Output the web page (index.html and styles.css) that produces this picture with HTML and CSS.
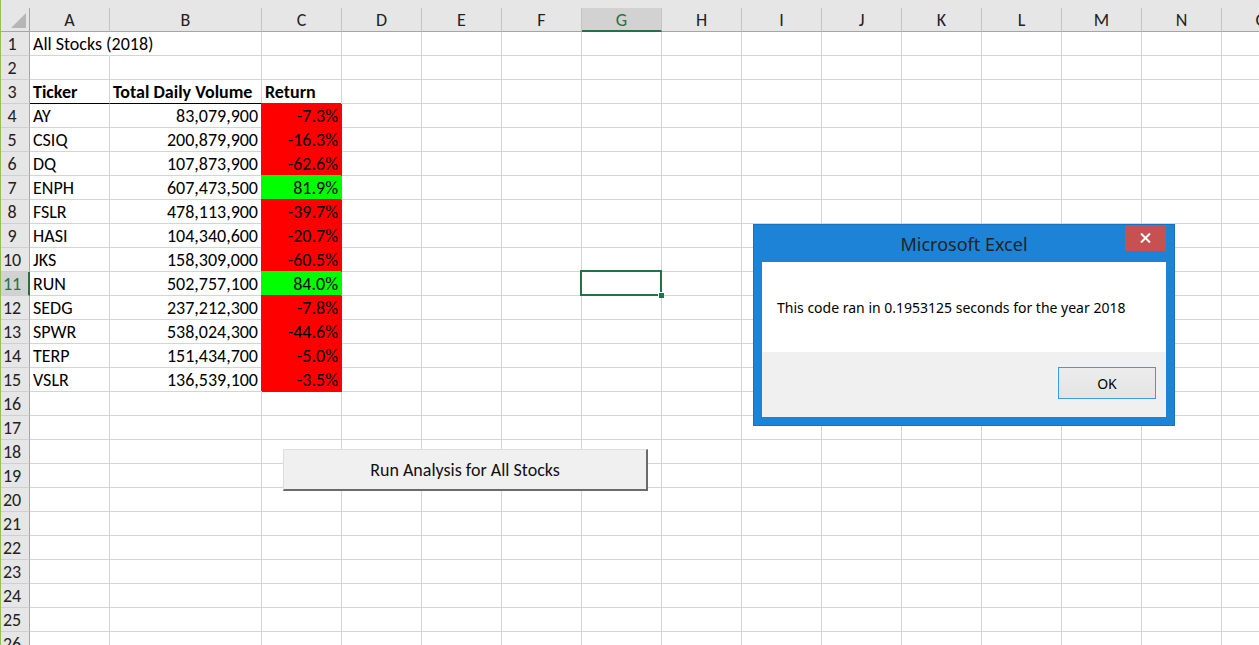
FILE: index.html
```html
<!DOCTYPE html>
<html lang="en">
<head>
<meta charset="utf-8">
<title>Excel - All Stocks (2018)</title>
<link rel="stylesheet" href="styles.css">
</head>
<body>
<div class="sheet">
  <div class="row hrow">
    <div class="corner"><span class="tri"></span></div>
    <div class="ch">A</div><div class="ch">B</div><div class="ch">C</div><div class="ch">D</div><div class="ch">E</div><div class="ch">F</div><div class="ch sel">G</div><div class="ch">H</div><div class="ch">I</div><div class="ch">J</div><div class="ch">K</div><div class="ch">L</div><div class="ch">M</div><div class="ch">N</div><div class="ch">O</div>
  </div>
  <div class="row"><div class="rh">1</div><div class="c spill">All Stocks (2018)</div><div class="c"></div><div class="c"></div><div class="c"></div><div class="c"></div><div class="c"></div><div class="c"></div><div class="c"></div><div class="c"></div><div class="c"></div><div class="c"></div><div class="c"></div><div class="c"></div><div class="c"></div><div class="c"></div></div>
  <div class="row"><div class="rh">2</div><div class="c"></div><div class="c"></div><div class="c"></div><div class="c"></div><div class="c"></div><div class="c"></div><div class="c"></div><div class="c"></div><div class="c"></div><div class="c"></div><div class="c"></div><div class="c"></div><div class="c"></div><div class="c"></div><div class="c"></div></div>
  <div class="row"><div class="rh">3</div><div class="c b ul">Ticker</div><div class="c b ul">Total Daily Volume</div><div class="c b">Return</div><div class="c"></div><div class="c"></div><div class="c"></div><div class="c"></div><div class="c"></div><div class="c"></div><div class="c"></div><div class="c"></div><div class="c"></div><div class="c"></div><div class="c"></div><div class="c"></div></div>
  <div class="row"><div class="rh">4</div><div class="c">AY</div><div class="c num">83,079,900</div><div class="c num neg">-7.3%</div><div class="c"></div><div class="c"></div><div class="c"></div><div class="c"></div><div class="c"></div><div class="c"></div><div class="c"></div><div class="c"></div><div class="c"></div><div class="c"></div><div class="c"></div><div class="c"></div></div>
  <div class="row"><div class="rh">5</div><div class="c">CSIQ</div><div class="c num">200,879,900</div><div class="c num neg">-16.3%</div><div class="c"></div><div class="c"></div><div class="c"></div><div class="c"></div><div class="c"></div><div class="c"></div><div class="c"></div><div class="c"></div><div class="c"></div><div class="c"></div><div class="c"></div><div class="c"></div></div>
  <div class="row"><div class="rh">6</div><div class="c">DQ</div><div class="c num">107,873,900</div><div class="c num neg">-62.6%</div><div class="c"></div><div class="c"></div><div class="c"></div><div class="c"></div><div class="c"></div><div class="c"></div><div class="c"></div><div class="c"></div><div class="c"></div><div class="c"></div><div class="c"></div><div class="c"></div></div>
  <div class="row"><div class="rh">7</div><div class="c">ENPH</div><div class="c num">607,473,500</div><div class="c num pos">81.9%</div><div class="c"></div><div class="c"></div><div class="c"></div><div class="c"></div><div class="c"></div><div class="c"></div><div class="c"></div><div class="c"></div><div class="c"></div><div class="c"></div><div class="c"></div><div class="c"></div></div>
  <div class="row"><div class="rh">8</div><div class="c">FSLR</div><div class="c num">478,113,900</div><div class="c num neg">-39.7%</div><div class="c"></div><div class="c"></div><div class="c"></div><div class="c"></div><div class="c"></div><div class="c"></div><div class="c"></div><div class="c"></div><div class="c"></div><div class="c"></div><div class="c"></div><div class="c"></div></div>
  <div class="row"><div class="rh">9</div><div class="c">HASI</div><div class="c num">104,340,600</div><div class="c num neg">-20.7%</div><div class="c"></div><div class="c"></div><div class="c"></div><div class="c"></div><div class="c"></div><div class="c"></div><div class="c"></div><div class="c"></div><div class="c"></div><div class="c"></div><div class="c"></div><div class="c"></div></div>
  <div class="row"><div class="rh">10</div><div class="c">JKS</div><div class="c num">158,309,000</div><div class="c num neg">-60.5%</div><div class="c"></div><div class="c"></div><div class="c"></div><div class="c"></div><div class="c"></div><div class="c"></div><div class="c"></div><div class="c"></div><div class="c"></div><div class="c"></div><div class="c"></div><div class="c"></div></div>
  <div class="row"><div class="rh sel">11</div><div class="c">RUN</div><div class="c num">502,757,100</div><div class="c num pos">84.0%</div><div class="c"></div><div class="c"></div><div class="c"></div><div class="c"></div><div class="c"></div><div class="c"></div><div class="c"></div><div class="c"></div><div class="c"></div><div class="c"></div><div class="c"></div><div class="c"></div></div>
  <div class="row"><div class="rh">12</div><div class="c">SEDG</div><div class="c num">237,212,300</div><div class="c num neg">-7.8%</div><div class="c"></div><div class="c"></div><div class="c"></div><div class="c"></div><div class="c"></div><div class="c"></div><div class="c"></div><div class="c"></div><div class="c"></div><div class="c"></div><div class="c"></div><div class="c"></div></div>
  <div class="row"><div class="rh">13</div><div class="c">SPWR</div><div class="c num">538,024,300</div><div class="c num neg">-44.6%</div><div class="c"></div><div class="c"></div><div class="c"></div><div class="c"></div><div class="c"></div><div class="c"></div><div class="c"></div><div class="c"></div><div class="c"></div><div class="c"></div><div class="c"></div><div class="c"></div></div>
  <div class="row"><div class="rh">14</div><div class="c">TERP</div><div class="c num">151,434,700</div><div class="c num neg">-5.0%</div><div class="c"></div><div class="c"></div><div class="c"></div><div class="c"></div><div class="c"></div><div class="c"></div><div class="c"></div><div class="c"></div><div class="c"></div><div class="c"></div><div class="c"></div><div class="c"></div></div>
  <div class="row"><div class="rh">15</div><div class="c">VSLR</div><div class="c num">136,539,100</div><div class="c num neg">-3.5%</div><div class="c"></div><div class="c"></div><div class="c"></div><div class="c"></div><div class="c"></div><div class="c"></div><div class="c"></div><div class="c"></div><div class="c"></div><div class="c"></div><div class="c"></div><div class="c"></div></div>
  <div class="row"><div class="rh">16</div><div class="c"></div><div class="c"></div><div class="c"></div><div class="c"></div><div class="c"></div><div class="c"></div><div class="c"></div><div class="c"></div><div class="c"></div><div class="c"></div><div class="c"></div><div class="c"></div><div class="c"></div><div class="c"></div><div class="c"></div></div>
  <div class="row"><div class="rh">17</div><div class="c"></div><div class="c"></div><div class="c"></div><div class="c"></div><div class="c"></div><div class="c"></div><div class="c"></div><div class="c"></div><div class="c"></div><div class="c"></div><div class="c"></div><div class="c"></div><div class="c"></div><div class="c"></div><div class="c"></div></div>
  <div class="row"><div class="rh">18</div><div class="c"></div><div class="c"></div><div class="c"></div><div class="c"></div><div class="c"></div><div class="c"></div><div class="c"></div><div class="c"></div><div class="c"></div><div class="c"></div><div class="c"></div><div class="c"></div><div class="c"></div><div class="c"></div><div class="c"></div></div>
  <div class="row"><div class="rh">19</div><div class="c"></div><div class="c"></div><div class="c"></div><div class="c"></div><div class="c"></div><div class="c"></div><div class="c"></div><div class="c"></div><div class="c"></div><div class="c"></div><div class="c"></div><div class="c"></div><div class="c"></div><div class="c"></div><div class="c"></div></div>
  <div class="row"><div class="rh">20</div><div class="c"></div><div class="c"></div><div class="c"></div><div class="c"></div><div class="c"></div><div class="c"></div><div class="c"></div><div class="c"></div><div class="c"></div><div class="c"></div><div class="c"></div><div class="c"></div><div class="c"></div><div class="c"></div><div class="c"></div></div>
  <div class="row"><div class="rh">21</div><div class="c"></div><div class="c"></div><div class="c"></div><div class="c"></div><div class="c"></div><div class="c"></div><div class="c"></div><div class="c"></div><div class="c"></div><div class="c"></div><div class="c"></div><div class="c"></div><div class="c"></div><div class="c"></div><div class="c"></div></div>
  <div class="row"><div class="rh">22</div><div class="c"></div><div class="c"></div><div class="c"></div><div class="c"></div><div class="c"></div><div class="c"></div><div class="c"></div><div class="c"></div><div class="c"></div><div class="c"></div><div class="c"></div><div class="c"></div><div class="c"></div><div class="c"></div><div class="c"></div></div>
  <div class="row"><div class="rh">23</div><div class="c"></div><div class="c"></div><div class="c"></div><div class="c"></div><div class="c"></div><div class="c"></div><div class="c"></div><div class="c"></div><div class="c"></div><div class="c"></div><div class="c"></div><div class="c"></div><div class="c"></div><div class="c"></div><div class="c"></div></div>
  <div class="row"><div class="rh">24</div><div class="c"></div><div class="c"></div><div class="c"></div><div class="c"></div><div class="c"></div><div class="c"></div><div class="c"></div><div class="c"></div><div class="c"></div><div class="c"></div><div class="c"></div><div class="c"></div><div class="c"></div><div class="c"></div><div class="c"></div></div>
  <div class="row"><div class="rh">25</div><div class="c"></div><div class="c"></div><div class="c"></div><div class="c"></div><div class="c"></div><div class="c"></div><div class="c"></div><div class="c"></div><div class="c"></div><div class="c"></div><div class="c"></div><div class="c"></div><div class="c"></div><div class="c"></div><div class="c"></div></div>
  <div class="row"><div class="rh">26</div><div class="c"></div><div class="c"></div><div class="c"></div><div class="c"></div><div class="c"></div><div class="c"></div><div class="c"></div><div class="c"></div><div class="c"></div><div class="c"></div><div class="c"></div><div class="c"></div><div class="c"></div><div class="c"></div><div class="c"></div></div>

  <div class="selection"><span class="handle"></span></div>

  <button class="run-btn">Run Analysis for All Stocks</button>

  <div class="dialog">
    <div class="dlg-title">
      <span class="dlg-caption">Microsoft Excel</span>
      <button class="dlg-close" aria-label="Close"><svg width="11" height="10" viewBox="0 0 11 10"><path d="M1 0.5 L10 9.5 M10 0.5 L1 9.5" stroke="#fff" stroke-width="2" fill="none"/></svg></button>
    </div>
    <div class="dlg-body">
      <p class="dlg-msg">This code ran in 0.1953125 seconds for the year 2018</p>
      <div class="dlg-footer"><button class="dlg-ok">OK</button></div>
    </div>
  </div>
</div>
</body>
</html>
```

FILE: styles.css
```css
html, body {
  margin: 0;
  padding: 0;
  background: #fff;
  overflow: hidden;
}

.sheet {
  position: relative;
  width: 1258px;
  height: 645px;
  overflow: hidden;
  border-left: 1px solid #93c051;
  font-family: "Carlito", "Lato", "Liberation Sans", sans-serif;
  font-size: 18px;
  color: #000;
}

.row {
  display: grid;
  grid-template-columns: 29px 80px 152px repeat(13, 80px);
  height: 24px;
}

.hrow {
  height: 32px;
  padding-top: 8px;
  box-sizing: border-box;
  background: #e6e6e6;
}

.corner,
.ch {
  box-sizing: border-box;
  height: 24px;
  border-right: 1px solid #c4c4c4;
  border-bottom: 1px solid #a5a5a5;
}

.corner {
  position: relative;
  border-right-color: #a5a5a5;
}

.tri {
  position: absolute;
  right: 3px;
  bottom: 3px;
  width: 0;
  height: 0;
  border-left: 15px solid transparent;
  border-bottom: 15px solid #b6b6b6;
}

.ch {
  text-align: center;
  line-height: 24px;
  color: #222;
}

.ch.sel {
  background: #d2d2d2;
  color: #217346;
  border-bottom: 2px solid #217346;
}

.rh {
  box-sizing: border-box;
  height: 24px;
  background: #e6e6e6;
  border-right: 1px solid #a5a5a5;
  border-bottom: 1px solid #cfcfcf;
  text-align: center;
  padding-right: 6px;
  line-height: 24px;
  color: #222;
  white-space: nowrap;
  overflow: hidden;
}

.rh.sel {
  background: #d2d2d2;
  color: #217346;
  border-right: 2px solid #217346;
  padding-right: 5px;
}

.c {
  box-sizing: border-box;
  height: 24px;
  border-right: 1px solid #d4d4d4;
  border-bottom: 1px solid #d4d4d4;
  padding: 0 3px;
  line-height: 25px;
  white-space: nowrap;
  overflow: hidden;
}

.c.spill {
  overflow: visible;
  border-right-color: transparent;
}

.c.b {
  font-weight: bold;
}

.c.ul {
  border-bottom-color: #000;
}

.c.num {
  text-align: right;
}

.c.neg {
  background: #ff0000;
  border-color: #ff0000;
  box-shadow: -1px -1px 0 0 #ff0000;
}

.c.pos {
  background: #00ff00;
  border-color: #00ff00;
  box-shadow: -1px -1px 0 0 #00ff00;
}

.selection {
  position: absolute;
  left: 579px;
  top: 270px;
  width: 82px;
  height: 26px;
  box-sizing: border-box;
  border: 2px solid #217346;
}

.handle {
  position: absolute;
  right: -4px;
  bottom: -4px;
  width: 6px;
  height: 6px;
  box-sizing: border-box;
  background: #217346;
  border-left: 1px solid #fff;
  border-top: 1px solid #fff;
}

.run-btn {
  position: absolute;
  left: 282px;
  top: 449px;
  width: 365px;
  height: 42px;
  box-sizing: border-box;
  margin: 0;
  padding: 0;
  background: #f0f0f0;
  border-top: 1px solid #dedede;
  border-left: 1px solid #dedede;
  border-right: 2px solid #6b6b6b;
  border-bottom: 2px solid #6b6b6b;
  font-family: "Carlito", "Lato", "Liberation Sans", sans-serif;
  font-size: 18px;
  color: #111;
}

.dialog {
  position: absolute;
  left: 752px;
  top: 224px;
  width: 422px;
  height: 202px;
  box-sizing: border-box;
  background: #1c83d7;
  border: 1px solid #1872c4;
  padding: 0 8px 8px;
  display: flex;
  flex-direction: column;
  font-family: "Noto Sans", "Open Sans", sans-serif;
}

.dlg-title {
  position: relative;
  height: 37px;
  display: flex;
  align-items: center;
  justify-content: center;
}

.dlg-caption {
  font-size: 18px;
  color: #232323;
}

.dlg-close {
  position: absolute;
  right: 0;
  top: 0;
  width: 41px;
  height: 26px;
  margin: 0;
  padding: 0;
  border: 0;
  background: #c75050;
  display: flex;
  align-items: center;
  justify-content: center;
}

.dlg-close svg {
  display: block;
}

.dlg-body {
  flex: 1;
  display: flex;
  flex-direction: column;
  background: #fff;
}

.dlg-msg {
  margin: 0;
  height: 90px;
  display: flex;
  align-items: center;
  padding-left: 15px;
  font-size: 14px;
  color: #000;
}

.dlg-footer {
  flex: 1;
  background: #f0f0f0;
  display: flex;
  justify-content: flex-end;
  align-items: flex-start;
  padding: 15px 10px 0 0;
}

.dlg-ok {
  width: 98px;
  height: 32px;
  margin: 0;
  padding: 0;
  box-sizing: border-box;
  border: 1px solid #3b99f0;
  background: linear-gradient(#ececec, #e4e4e4);
  font-family: "Noto Sans", "Open Sans", sans-serif;
  font-size: 14px;
  color: #000;
}
```
